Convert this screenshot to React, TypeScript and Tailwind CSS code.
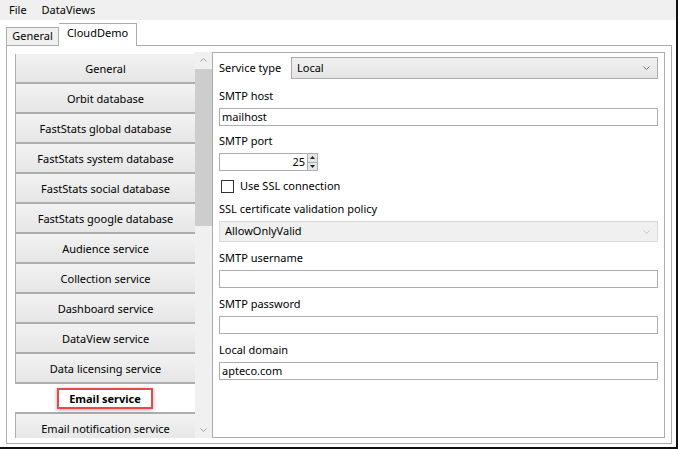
import { useState } from "react";

const items = [
  "General",
  "Orbit database",
  "FastStats global database",
  "FastStats system database",
  "FastStats social database",
  "FastStats google database",
  "Audience service",
  "Collection service",
  "Dashboard service",
  "DataView service",
  "Data licensing service",
  "Email service",
  "Email notification service",
];

function Chevron({ color = "#707070" }: { color?: string }) {
  return (
    <svg width="7" height="4" viewBox="0 0 7 4">
      <path d="M0.5 0.5 L3.5 3.5 L6.5 0.5" fill="none" stroke={color} strokeWidth="1" />
    </svg>
  );
}

function Field({ label, value = "" }: { label: string; value?: string }) {
  return (
    <div className="flex flex-col">
      <div className="h-[16px] leading-[16px]">{label}</div>
      <div className="mt-[4px] h-[18px] border border-[#abadb3] bg-white px-[2px] leading-[16px]">
        {value}
      </div>
    </div>
  );
}

export default function App() {
  const [selected] = useState("Email service");

  return (
    <div
      className="relative w-[678px] h-[449px] bg-white border-r-2 border-b-2 border-[#111] text-[11px] text-black overflow-hidden"
      style={{ fontFamily: '"Noto Sans", "Open Sans", sans-serif' }}
    >
      {/* MENU BAR */}
      <div className="flex h-[20px] items-center bg-[#f0f0f0] pl-[9px] gap-[15px] leading-[20px]">
        <span>File</span>
        <span>DataViews</span>
      </div>

      {/* TABS */}
      <div className="flex h-[25px] items-end pl-[6px]">
        <div className="h-[18px] w-[53px] text-center border border-b-0 border-[#acacac] bg-[#f0f0f0] leading-[15px]">
          General
        </div>
        <div className="relative top-[1px] h-[23px] w-[78px] text-center border border-b-0 border-l-0 border-[#acacac] bg-white leading-[18px] z-10">
          CloudDemo
        </div>
      </div>

      {/* TAB PANEL */}
      <div className="ml-[6px] w-[666px] h-[399px] border border-[#acacac] bg-white pt-[6px] pl-[8px] pr-[6px] pb-[5px] flex">
        {/* LEFT LIST */}
        <div className="flex h-[386px] w-[197px]">
          <div className="flex-1 flex flex-col pt-[2px] overflow-hidden">
            {items.map((it) => {
              const sel = it === selected;
              return (
                <div
                  key={it}
                  className={
                    sel
                      ? "relative shrink-0 h-[30px] pt-[1px] flex items-center justify-center border-l border-b-2 border-[#adadad] bg-white font-bold -ml-[1px]"
                      : "shrink-0 h-[30px] pt-[2px] flex items-center justify-center border-l border-b-2 border-[#adadad] bg-gradient-to-b from-[#f2f2f2] to-[#e6e6e6]"
                  }
                >
                  {sel ? (
                    <span className="px-[10px] h-[21px] leading-[17px] border-2 border-[#e8474b] shadow-[0_1px_4px_rgba(0,0,0,0.35)]">
                      {it}
                    </span>
                  ) : (
                    it
                  )}
                </div>
              );
            })}
          </div>
          {/* SCROLLBAR */}
          <div className="w-[17px] bg-[#f0f0f0] flex flex-col items-center">
            <div className="h-[17px] flex items-center justify-center rotate-180">
              <Chevron color="#a3a3a3" />
            </div>
            <div className="w-[17px] h-[157px] bg-[#cdcdcd]" />
            <div className="flex-1" />
            <div className="h-[17px] flex items-center justify-center">
              <Chevron color="#a3a3a3" />
            </div>
          </div>
        </div>

        {/* RIGHT PANEL */}
        <div className="flex-1 h-[386px] border border-[#acacac] px-[6px] pt-[4px]">
          {/* Service type */}
          <div className="flex items-center h-[22px]">
            <span className="w-[72px]">Service type</span>
            <div className="flex-1 h-[22px] border border-[#acacac] bg-gradient-to-b from-[#f0f0f0] to-[#e5e5e5] flex items-center justify-between pl-[5px] pr-[7px]">
              <span>Local</span>
              <Chevron />
            </div>
          </div>

          <div className="mt-[9px]">
            <Field label="SMTP host" value="mailhost" />
          </div>

          {/* SMTP port */}
          <div className="mt-[7px] h-[16px] leading-[16px]">SMTP port</div>
          <div className="mt-[4px] flex h-[18px] w-[99px]">
            <div className="flex-1 border border-[#abadb3] text-right pr-[2px] leading-[16px]">25</div>
            <div className="w-[10px] flex flex-col border border-l-0 border-[#abadb3]">
              <div className="flex-1 bg-[#e6e6e6] flex items-center justify-center border-b border-[#abadb3]">
                <svg width="5" height="3" viewBox="0 0 5 3">
                  <path d="M0 3 L2.5 0 L5 3 Z" fill="#222" />
                </svg>
              </div>
              <div className="flex-1 bg-[#e6e6e6] flex items-center justify-center">
                <svg width="5" height="3" viewBox="0 0 5 3">
                  <path d="M0 0 L2.5 3 L5 0 Z" fill="#222" />
                </svg>
              </div>
            </div>
          </div>

          {/* checkbox */}
          <div className="mt-[8px] flex items-center h-[14px] pl-[2px]">
            <div className="w-[13px] h-[13px] border border-[#333] bg-white" />
            <span className="ml-[6px]">Use SSL connection</span>
          </div>

          {/* SSL policy */}
          <div className="mt-[8px] h-[16px] leading-[16px]">SSL certificate validation policy</div>
          <div className="mt-[4px] h-[21px] border border-[#d9d9d9] bg-[#f0f0f0] flex items-center justify-between pl-[5px] pr-[7px]">
            <span>AllowOnlyValid</span>
            <Chevron color="#c4c4c4" />
          </div>

          <div className="mt-[8px]">
            <Field label="SMTP username" />
          </div>
          <div className="mt-[8px]">
            <Field label="SMTP password" />
          </div>
          <div className="mt-[8px]">
            <Field label="Local domain" value="apteco.com" />
          </div>
        </div>
      </div>
    </div>
  );
}
